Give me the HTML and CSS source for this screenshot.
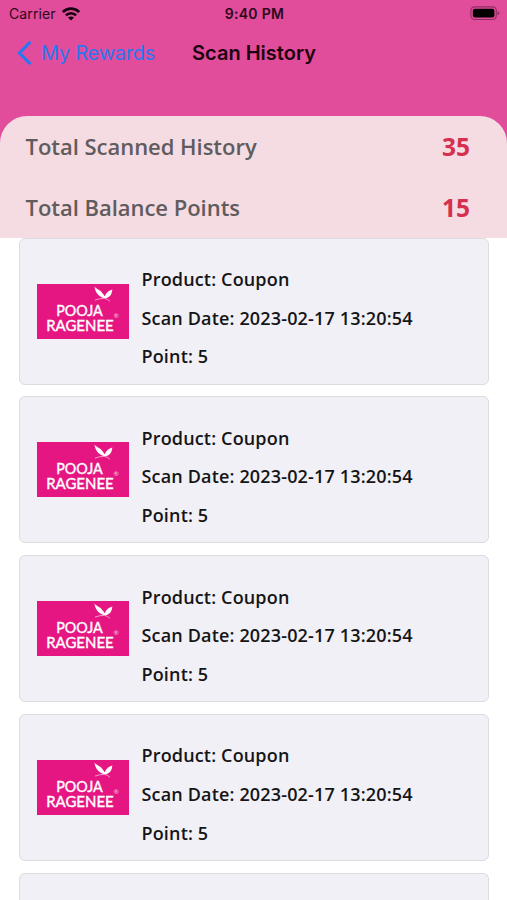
FILE: index.html
```
<!DOCTYPE html>
<html lang="en">
<head>
<meta charset="utf-8">
<title>Scan History</title>
<link rel="stylesheet" href="styles.css">
</head>
<body>
<header class="top">
  <div class="status">
    <div class="carrier">
      <span>Carrier</span>
      <svg width="18" height="14" viewBox="0 0 18 14" fill="none" stroke="#16020d" stroke-width="2.7">
        <path d="M.8 5.1C5.5.4 12.5.4 17.2 5.1"/>
        <path d="M3.9 8.4C6.8 5.5 11.2 5.5 14.1 8.4"/>
        <path d="M9 13.5L6 10.6C7.7 9.1 10.3 9.1 12 10.6Z" fill="#16020d" stroke="none"/>
      </svg>
    </div>
    <span class="clock">9:40 PM</span>
    <svg class="battery" width="30" height="15" viewBox="0 0 30 15">
      <rect x=".9" y=".9" width="25.4" height="12.6" rx="3.7" fill="none" stroke="#8f2d63" stroke-width="1.1"/>
      <rect x="2.8" y="2.8" width="21.6" height="8.8" rx="2" fill="#000"/>
      <path d="M27.6 5.1Q29.4 5.8 29.4 7.2T27.6 9.3Z" fill="#8f2d63"/>
    </svg>
  </div>
  <nav class="nav">
    <a class="back">
      <svg width="15" height="24" viewBox="0 0 15 24"><path d="M12.5 1.8L2.3 12L12.5 22.2" fill="none" stroke="#2878f0" stroke-width="3.1" stroke-linecap="round" stroke-linejoin="round"/></svg>
      <span>My Rewards</span>
    </a>
    <h1>Scan History</h1>
  </nav>
  <section class="summary">
    <div class="total"><span class="total-label">Total Scanned History</span><strong>35</strong></div>
    <div class="total"><span class="total-label">Total Balance Points</span><strong>15</strong></div>
  </section>
</header>
<main class="list" id="list"></main>
<script src="cards.js"></script>
</body>
</html>
```
FILE: cards.js
```
const logo = `
  <svg class="logo" viewBox="0 0 92 55">
    <rect width="92" height="55" fill="#e51682"/>
    <path d="M57.4 2.6C59.5 5.2 63.5 5.8 66.5 10.6L67.6 12.2C69.5 8.2 71.8 6.4 75.3 5.4C75 9.8 73.2 13.2 68.8 14.2C64.5 14.4 58.6 11 57.4 2.6Z" fill="#fff"/>
    <path d="M58 16.1Q63 14.2 67.5 14.4Q71 15 73 17.4" fill="none" stroke="#fff" stroke-width=".7" opacity=".8"/>
    <text x="19.3" y="32.4" font-size="14.8" textLength="46.5" lengthAdjust="spacingAndGlyphs">POOJA</text>
    <text x="9.2" y="46.9" font-size="14.8" textLength="67.5" lengthAdjust="spacingAndGlyphs">RAGENEE</text>
    <text class="mark" x="76.6" y="33.8" font-size="6.5">®</text>
  </svg>`;

const scans = Array.from({ length: 4 }, () => ({
  product: "Coupon", date: "2023-02-17 13:20:54", point: 5
}));

document.getElementById("list").innerHTML = scans.map(s => `
  <article class="card">${logo}
    <div class="info">
      <p>Product: ${s.product}</p>
      <p>Scan Date: ${s.date}</p>
      <p>Point: ${s.point}</p>
    </div>
  </article>`).join("") + '<article class="card card-next"></article>';
```
FILE: styles.css
```
* { box-sizing: border-box; }
body {
  margin: 0;
  background: #fff;
  font-family: "Open Sans", "Noto Sans", sans-serif;
}
.top { background: #e14c9b; }
.status {
  display: grid;
  grid-template-columns: 1fr auto 1fr;
  align-items: center;
  height: 27px;
  padding: 0 7px 0 9px;
  font-family: Inter, sans-serif;
  font-size: 14px;
  color: #2b0a1c;
}
.carrier { display: flex; align-items: center; gap: 6px; letter-spacing: .1px; }
.clock { font-weight: 600; letter-spacing: .3px; }
.battery { justify-self: end; }
.nav {
  display: grid;
  grid-template-columns: 1fr auto 1fr;
  align-items: center;
  height: 51px;
  margin-bottom: 37.5px;
  padding: 0 16px 0 17px;
  font-family: Inter, sans-serif;
}
.back {
  display: flex;
  align-items: center;
  gap: 9px;
  color: #2878f0;
  font-size: 20px;
  letter-spacing: -.25px;
  white-space: nowrap;
}
.nav h1 { margin: 0; font-size: 20px; font-weight: 600; color: #1c0311; }
.summary {
  height: 122px;
  padding: 0 37px 0 25.5px;
  border-radius: 27px 27px 0 0;
  background: #f5dbe2;
}
.total {
  display: flex;
  align-items: center;
  justify-content: space-between;
  height: 61px;
}
.total-label { font-size: 22px; font-weight: 600; color: #605c5d; letter-spacing: -.03px; }
.total strong { font-size: 24.5px; font-weight: 700; color: #d5304f; }
.list {
  display: flex;
  flex-direction: column;
  gap: 11.8px;
  padding: 0 18px 0 19px;
}
.card {
  display: flex;
  align-items: center;
  flex: none;
  gap: 12.5px;
  height: 147px;
  padding-left: 17px;
  border: 1.5px solid #dcdcde;
  border-radius: 6px;
  background: #f1f0f6;
}
.card-next {
  height: 27px;
  border-bottom: 0;
  border-radius: 6px 6px 0 0;
}
.logo { width: 92px; height: 55px; }
.logo text { font-family: Lato, sans-serif; font-weight: 400; fill: #fff; stroke: #fff; stroke-width: .4px; }
.logo .mark { stroke: none; opacity: .75; }
.info { padding-top: 14px; }
.info p {
  margin: 0;
  font-size: 18px;
  font-weight: 600;
  line-height: 38.7px;
  letter-spacing: .16px;
  color: #151517;
  white-space: nowrap;
}
```
